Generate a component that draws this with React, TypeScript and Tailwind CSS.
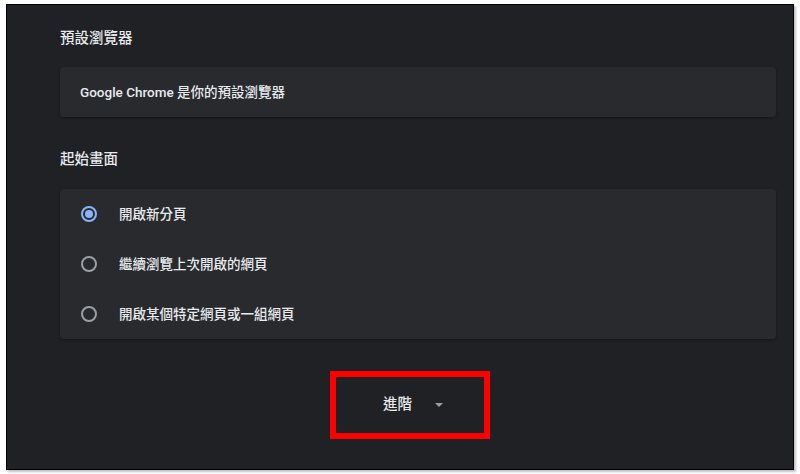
const font = { fontFamily: "Roboto, 'Noto Sans CJK TC', sans-serif" };

const options = ["開啟新分頁", "繼續瀏覽上次開啟的網頁", "開啟某個特定網頁或一組網頁"];

function Radio({ checked }: { checked: boolean }) {
  return checked ? (
    <span className="w-[16px] h-[16px] rounded-full border-2 border-[#8ab4f8] flex items-center justify-center">
      <span className="w-[8px] h-[8px] rounded-full bg-[#8ab4f8]" />
    </span>
  ) : (
    <span className="w-[16px] h-[16px] rounded-full border-2 border-[#9aa0a6]" />
  );
}

export default function App() {
  return (
    <div className="w-[800px] h-[474px] bg-white overflow-hidden" style={font}>
      {/* Settings frame */}
      <div className="ml-[6px] mt-[4px] w-[788px] h-[466px] border border-black bg-[#202124] text-[#e8eaed] font-medium pl-[53px] pr-[17px] pt-[24px] shadow-[2px_2px_2px_rgba(0,0,0,0.25)]">
        <h2 className="text-[14.5px] leading-[20px] h-[20px]">預設瀏覽器</h2>
        <div className="mt-[18px] h-[50px] rounded bg-[#292a2d] shadow-[0_1px_3px_rgba(0,0,0,0.35)] flex items-center px-[20px] text-[13.5px]">
          Google Chrome 是你的預設瀏覽器
        </div>

        <h2 className="mt-[33px] text-[14.5px] leading-[20px] h-[20px]">起始畫面</h2>
        <div className="mt-[19px] rounded bg-[#292a2d] shadow-[0_1px_3px_rgba(0,0,0,0.35)]">
          {options.map((label, i) => (
            <div key={label} className="h-[50px] flex items-center pl-[21px] text-[13.5px]">
              <Radio checked={i === 0} />
              <span className="ml-[22px]">{label}</span>
            </div>
          ))}
        </div>

        {/* Advanced toggle, highlighted */}
        <div className="mt-[32px] ml-[270px] w-[160px] h-[68px] border-[6px] border-[#ff0000] flex items-center pl-[47px]">
          <span className="text-[14.5px]">進階</span>
          <span className="ml-[23px] w-0 h-0 border-l-[4px] border-r-[4px] border-t-[4px] border-l-transparent border-r-transparent border-t-[#9aa0a6]" />
        </div>
      </div>
    </div>
  );
}
